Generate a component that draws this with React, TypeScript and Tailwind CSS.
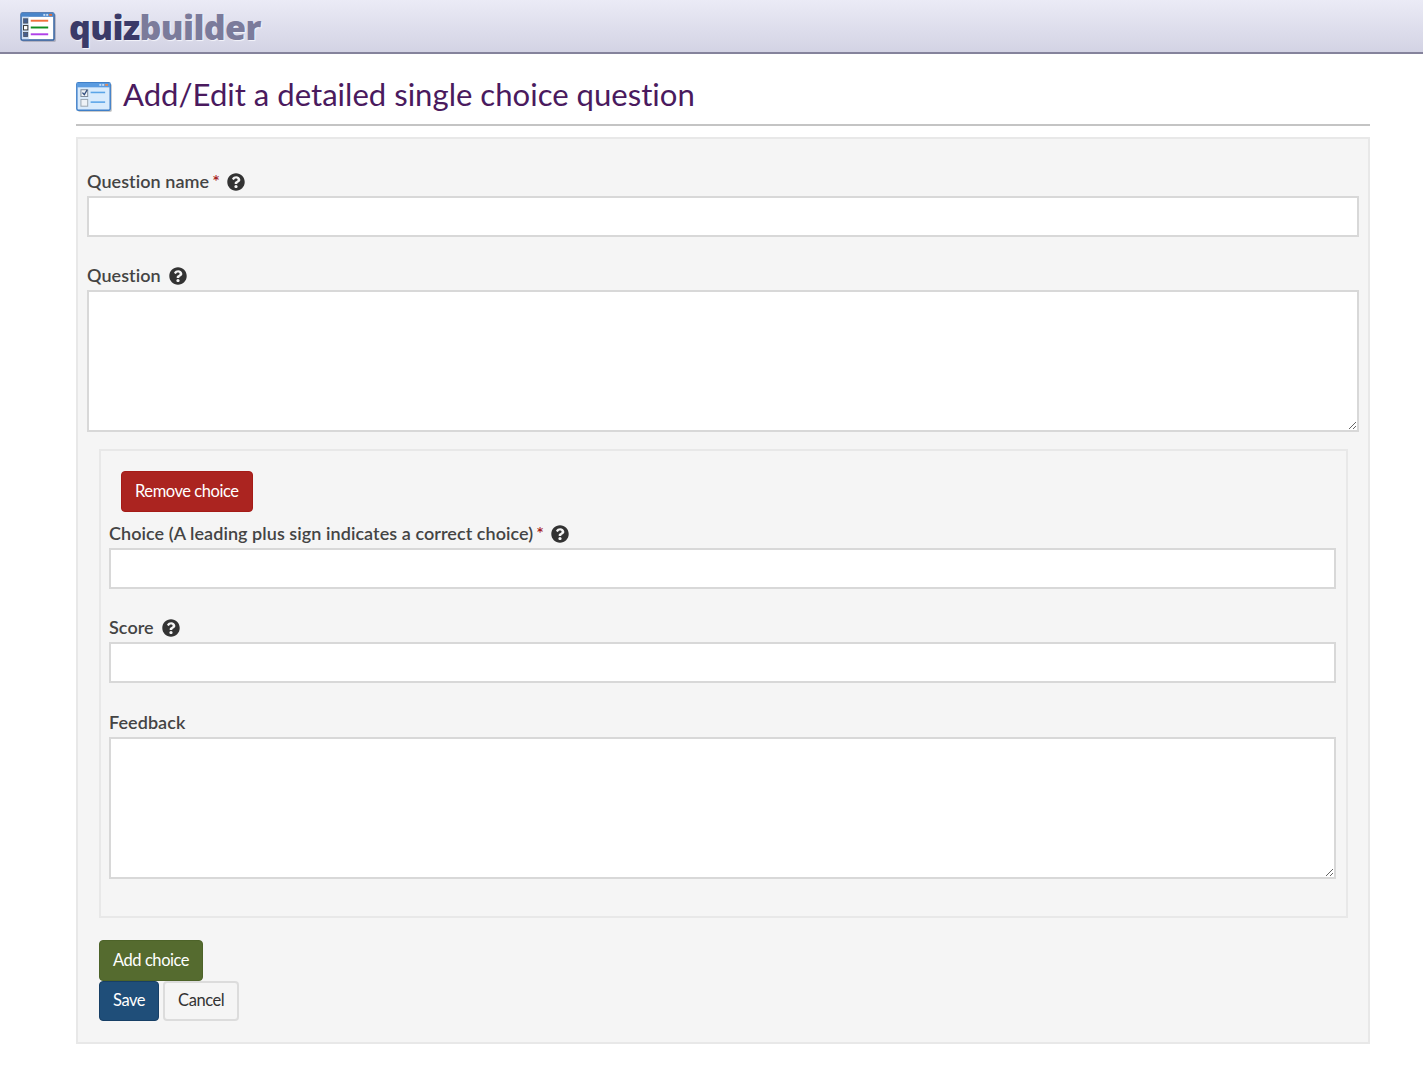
import { FaQuestionCircle } from "react-icons/fa"

function LogoIcon() {
  return (
    <svg width="37" height="31" viewBox="0 0 38 32" className="block">
      <rect x="2" y="2" width="35" height="29" rx="1.5" fill="#8a8a99" opacity="0.5" />
      <rect x="1" y="1" width="34" height="28" rx="1.5" fill="#fff" stroke="#2f5f9f" strokeWidth="1.5" />
      <rect x="1" y="1" width="34" height="4" fill="#4a85c9" />
      <rect x="24" y="2" width="2" height="2" fill="#c5dcf5" />
      <rect x="27" y="2" width="2" height="2" fill="#c5dcf5" />
      <rect x="30" y="2" width="3" height="2" fill="#e0703a" />
      <rect x="2" y="5" width="7" height="23" fill="#cfe0f5" />
      <rect x="3.5" y="7" width="4.5" height="4.5" fill="#46608f" stroke="#333" strokeWidth="0.5" />
      <rect x="3.5" y="14" width="4.5" height="4.5" fill="#fff" stroke="#333" strokeWidth="1" />
      <rect x="3.5" y="21" width="4.5" height="4.5" fill="#46608f" stroke="#333" strokeWidth="0.5" />
      <rect x="11" y="8" width="18" height="2" fill="#f0703a" />
      <rect x="11" y="15" width="18" height="2" fill="#0f8f1f" />
      <rect x="11" y="22" width="18" height="2" fill="#b040e8" />
    </svg>
  )
}

function TitleIcon() {
  return (
    <svg width="36" height="30" viewBox="0 0 37 31" className="block mt-[6px]">
      <rect x="2" y="2" width="35" height="29" rx="1.5" fill="#8a8a8a" opacity="0.45" />
      <rect x="0.75" y="0.75" width="34.5" height="28.5" rx="1.5" fill="#d9ebfc" stroke="#3f7fc8" strokeWidth="1.5" />
      <rect x="1" y="1" width="34" height="4.5" fill="#5a9be0" />
      <rect x="24" y="2" width="2" height="2" fill="#c5dcf5" />
      <rect x="27" y="2" width="2" height="2" fill="#c5dcf5" />
      <rect x="30" y="2" width="3" height="2" fill="#e08a5a" />
      <rect x="5" y="8" width="7" height="7" fill="#eef2f6" stroke="#7d8a99" strokeWidth="1" />
      <path d="M6.5 11l2 2 3-5" fill="none" stroke="#33507f" strokeWidth="1.4" />
      <rect x="5" y="18" width="7" height="7" fill="#eef2f6" stroke="#9aa5b0" strokeWidth="1" />
      <rect x="15" y="10" width="15" height="1.6" fill="#5aa5e8" />
      <rect x="15" y="20" width="15" height="1.6" fill="#5aa5e8" />
    </svg>
  )
}

function Label({ text, required, help }: { text: string; required?: boolean; help?: boolean }) {
  return (
    <label className="flex items-center h-[28px] pb-[1px] text-[18px] tracking-[0.06px] font-semibold text-[#444] [font-variant-ligatures:none]">
      <span>{text}</span>
      {required && <span className="ml-[3px] text-[#a51d1d]">*</span>}
      {help && <FaQuestionCircle className={`${required ? "ml-[7px]" : "ml-[8px]"} text-[#333] text-[18px]`} />}
    </label>
  )
}

const fieldClass = "block w-full bg-white border-2 border-[#d8d8d8] outline-none"
const buttonClass = "px-[13px] pb-[1px] rounded-[4px] text-[16.5px] tracking-[-0.44px] [font-variant-ligatures:none]"

export default function App() {
  return (
    <div className="min-h-[1080px] bg-white font-['Lato','Liberation_Sans',sans-serif]">
      <header className="flex items-center h-[54px] pl-[20px] border-b-2 border-[#85839c] bg-gradient-to-b from-[#ebebf6] to-[#d3d3e4]">
        <div className="mt-[3px]">
          <LogoIcon />
        </div>
        <span className="ml-[12px] mt-[2px] text-[34px] leading-none font-extrabold font-['Open_Sans',sans-serif] tracking-[-0.6px] [text-shadow:1px_1px_1px_#f4f4fa]">
          <span className="text-[#3a3a68]">quiz</span>
          <span className="text-[#7b7b9b]">builder</span>
        </span>
      </header>

      <main className="w-[1423px] pl-[76px] pr-[53px]">
        <div className="flex items-center h-[72px] pt-[10px] border-b-2 border-[#c4c4c4]">
          <TitleIcon />
          <h1 className="ml-[11px] mt-[2px] text-[31.1px] leading-none text-[#4a1a5e] [font-variant-ligatures:none]">Add/Edit a detailed single choice question</h1>
        </div>

        <form className="mt-[11px] bg-[#f5f5f5] border-2 border-[#e8e8e8] px-[9px] pt-[29px] pb-[21px]">
          <Label text="Question name" required help />
          <input className={`${fieldClass} h-[41px]`} />

          <div className="mt-[25px]">
            <Label text="Question" help />
            <textarea className={`${fieldClass} h-[142px]`} />
          </div>

          <div className="mt-[17px] ml-[12px] mr-[11px] border-2 border-[#e8e8e8] pl-[8px] pr-[10px] pt-[20px] pb-[37px]">
            <button type="button" className={`${buttonClass} h-[41px] block ml-[12px] bg-[#ab2420] border border-[#a51b17] text-white`}>
              Remove choice
            </button>
            <div className="mt-[8px]">
              <Label text="Choice (A leading plus sign indicates a correct choice)" required help />
              <input className={`${fieldClass} h-[41px]`} />
            </div>
            <div className="mt-[25px]">
              <Label text="Score" help />
              <input className={`${fieldClass} h-[41px]`} />
            </div>
            <div className="mt-[26px]">
              <Label text="Feedback" />
              <textarea className={`${fieldClass} h-[142px]`} />
            </div>
          </div>

          <div className="mt-[22px] ml-[12px]">
            <button type="button" className={`${buttonClass} h-[41px] block bg-[#556b2f] border border-[#4d6329] text-white`}>
              Add choice
            </button>
            <div className="flex gap-[4px]">
              <button type="button" className={`${buttonClass} h-[40px] bg-[#1f4e79] border border-[#173f66] text-white`}>
                Save
              </button>
              <button type="button" className={`${buttonClass} h-[40px] bg-[#f5f5f5] border-2 border-[#dcdcdc] text-[#333]`}>
                Cancel
              </button>
            </div>
          </div>
        </form>
      </main>
    </div>
  )
}
